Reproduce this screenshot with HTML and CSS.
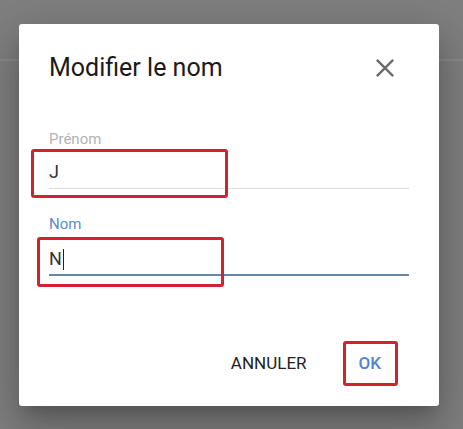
FILE: index.html
```html
<!DOCTYPE html>
<html lang="fr">
<head>
<meta charset="utf-8">
<title>Modifier le nom</title>
<link rel="stylesheet" href="styles.css">
</head>
<body>
<div class="page">
  <div class="page-header"></div>
</div>
<div class="dialog" role="dialog" aria-labelledby="dlg-title">
  <div class="dialog-head">
    <h2 class="dialog-title" id="dlg-title">Modifier le nom</h2>
    <button class="close-btn" aria-label="Fermer">
      <svg viewBox="0 0 24 24" width="30" height="30"><path d="M5.5 5.5 L18.5 18.5 M18.5 5.5 L5.5 18.5" stroke="#6b6b6b" stroke-width="1.9" fill="none"/></svg>
    </button>
  </div>
  <div class="field field-first">
    <div class="field-label">Prénom</div>
    <div class="field-value">J</div>
  </div>
  <div class="field field-second">
    <div class="field-label is-active">Nom</div>
    <div class="field-value is-focused">N<span class="caret"></span></div>
  </div>
  <div class="dialog-actions">
    <button class="text-btn">ANNULER</button>
    <button class="text-btn is-primary">OK</button>
  </div>
</div>
<div class="mark mark-1"></div>
<div class="mark mark-2"></div>
<div class="mark mark-3"></div>
</body>
</html>
```
FILE: styles.css
```css
html, body {
  margin: 0;
  padding: 0;
}
body {
  width: 463px;
  height: 429px;
  background: #7f7f7f;
  font-family: Roboto, "Liberation Sans", Arial, sans-serif;
  overflow: hidden;
  position: relative;
}
.page-header {
  height: 59px;
  border-bottom: 2px solid #8a8a8a;
}
.dialog {
  position: absolute;
  left: 19px;
  top: 24px;
  width: 420px;
  height: 382px;
  box-sizing: border-box;
  padding: 30px 30px 0 30px;
  background: #fff;
  border-radius: 3px;
  box-shadow: 0 11px 15px -7px rgba(0,0,0,.2), 0 24px 38px 3px rgba(0,0,0,.14), 0 9px 46px 8px rgba(0,0,0,.12);
  display: flex;
  flex-direction: column;
}
.dialog-head {
  display: flex;
  justify-content: space-between;
  align-items: center;
  height: 28px;
}
.dialog-title {
  margin: 0;
  font-size: 25px;
  line-height: 28px;
  font-weight: 400;
  color: #1a1a1a;
}
.close-btn {
  border: 0;
  background: none;
  padding: 0;
  margin-right: 9px;
  width: 30px;
  height: 30px;
  display: flex;
}
.field-label {
  font-size: 15px;
  line-height: 20px;
  color: #b3b3b3;
}
.field-label.is-active {
  color: #5b8bc8;
}
.field-first {
  margin-top: 47px;
}
.field-second {
  margin-top: 25px;
}
.field-value {
  margin-top: 7px;
  height: 32px;
  font-size: 18px;
  line-height: 32px;
  color: #333;
  border-bottom: 1px solid #dcdcdc;
  display: flex;
  align-items: center;
}
.field-value.is-focused {
  margin-top: 10px;
  height: 30px;
  line-height: 30px;
  border-bottom: 2px solid #5f88aa;
}
.caret {
  display: inline-block;
  width: 1px;
  height: 21px;
  margin-left: 1px;
  background: #222;
}
.dialog-actions {
  margin-top: auto;
  margin-bottom: 25px;
  display: flex;
  justify-content: flex-end;
  gap: 28px;
  padding-right: 16px;
}
.text-btn {
  border: 0;
  background: none;
  padding: 0 12px;
  height: 36px;
  font-family: inherit;
  font-size: 17px;
  line-height: 36px;
  color: #222;
}
.text-btn.is-primary {
  color: #4f82cf;
  font-weight: 500;
}
.mark {
  position: absolute;
  box-sizing: border-box;
  border: 3px solid #d1222f;
  border-radius: 3px;
}
.mark-1 { left: 31px; top: 149px; width: 197px; height: 49px; }
.mark-2 { left: 37px; top: 237px; width: 187px; height: 50px; }
.mark-3 { left: 343px; top: 341px; width: 55px; height: 45px; }
```
